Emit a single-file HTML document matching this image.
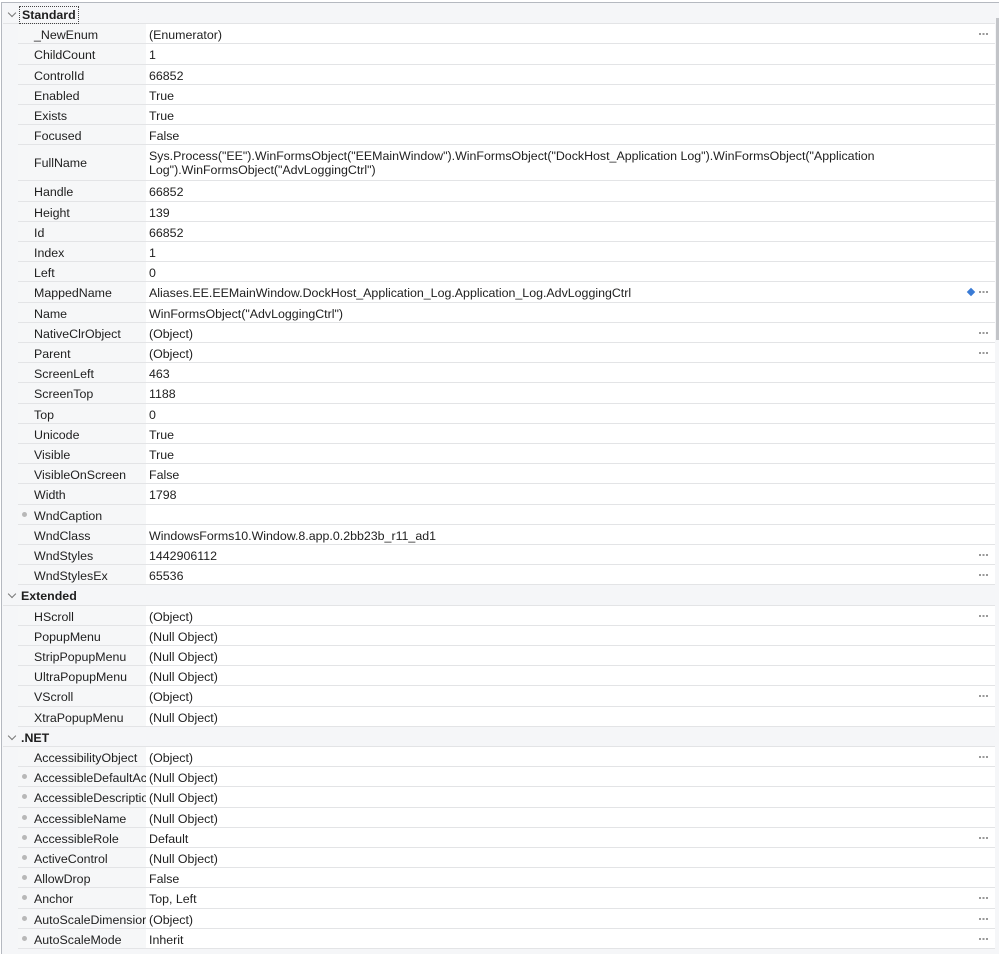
<!DOCTYPE html>
<html><head><meta charset="utf-8"><style>
*{margin:0;padding:0;box-sizing:border-box}
body{width:999px;height:954px;background:#fff;font-family:"Liberation Sans",Tahoma,sans-serif;font-size:12.4px;color:#1e1e1e;position:relative;overflow:hidden}
#frame{position:absolute;left:1px;top:2px;width:998px;height:952px;border-left:1px solid #b5b9c0;border-top:1px solid #b5b9c0;background:#f5f6f8}
.r{position:absolute;left:18px;right:4px;height:20.2px;border-bottom:1px solid #e3e4e6;background:#fff}
.r .n{position:absolute;left:0;top:0;bottom:0;width:128px;background:#f6f7f8;padding-left:16px;padding-top:2px;line-height:18px;white-space:nowrap;overflow:hidden}
.r .v{position:absolute;left:131px;top:0;right:0;padding-top:2px;line-height:18px;white-space:nowrap}
.h{position:absolute;left:3px;right:4px;height:20.2px;border-bottom:1px solid #e3e4e6;background:#f5f6f8;font-weight:bold;line-height:18px;padding-top:2px;padding-left:18px}
.h:before{content:"";position:absolute;left:6px;top:6px;width:5px;height:5px;border-right:1px solid #777;border-bottom:1px solid #777;transform:rotate(45deg)}
.d{position:absolute;left:4px;top:7px;width:5px;height:5px;border-radius:50%;background:#b8b8b8}
.e{position:absolute;right:7px;top:9px;width:9px;height:2px;background:repeating-linear-gradient(90deg,#999 0 2px,transparent 2px 3.5px)}
#sb{position:absolute;right:0;top:18px;width:3px;height:322px;background:#c2c4c8}
</style></head><body>
<div id="frame"></div>
<div id="sb"></div>
<div class="h" style="top:4px"><span style="outline:1px dotted #444;outline-offset:1px;padding:0 1px">Standard</span></div>
<div class="r" style="top:24.2px"><div class="n">_NewEnum</div><div class="v">(Enumerator)</div><span class="e"></span></div>
<div class="r" style="top:44.4px"><div class="n">ChildCount</div><div class="v">1</div></div>
<div class="r" style="top:64.6px"><div class="n">ControlId</div><div class="v">66852</div></div>
<div class="r" style="top:84.8px"><div class="n">Enabled</div><div class="v">True</div></div>
<div class="r" style="top:105px"><div class="n">Exists</div><div class="v">True</div></div>
<div class="r" style="top:125.2px"><div class="n">Focused</div><div class="v">False</div></div>
<div class="r" style="top:145.4px;height:36px"><div class="n" style="line-height:36px;padding-top:0">FullName</div><div class="v" style="line-height:14px;padding-top:4px;white-space:normal;width:740px">Sys.Process("EE").WinFormsObject("EEMainWindow").WinFormsObject("DockHost_Application Log").WinFormsObject("Application Log").WinFormsObject("AdvLoggingCtrl")</div></div>
<div class="r" style="top:181.4px"><div class="n">Handle</div><div class="v">66852</div></div>
<div class="r" style="top:201.6px"><div class="n">Height</div><div class="v">139</div></div>
<div class="r" style="top:221.8px"><div class="n">Id</div><div class="v">66852</div></div>
<div class="r" style="top:242px"><div class="n">Index</div><div class="v">1</div></div>
<div class="r" style="top:262.2px"><div class="n">Left</div><div class="v">0</div></div>
<div class="r" style="top:282.4px"><div class="n">MappedName</div><div class="v">Aliases.EE.EEMainWindow.DockHost_Application_Log.Application_Log.AdvLoggingCtrl</div><span style="position:absolute;right:21px;top:7px;width:6px;height:6px;background:#3a7bd5;transform:rotate(45deg)"></span><span class="e"></span></div>
<div class="r" style="top:302.6px"><div class="n">Name</div><div class="v">WinFormsObject("AdvLoggingCtrl")</div></div>
<div class="r" style="top:322.8px"><div class="n">NativeClrObject</div><div class="v">(Object)</div><span class="e"></span></div>
<div class="r" style="top:343px"><div class="n">Parent</div><div class="v">(Object)</div><span class="e"></span></div>
<div class="r" style="top:363.2px"><div class="n">ScreenLeft</div><div class="v">463</div></div>
<div class="r" style="top:383.4px"><div class="n">ScreenTop</div><div class="v">1188</div></div>
<div class="r" style="top:403.6px"><div class="n">Top</div><div class="v">0</div></div>
<div class="r" style="top:423.8px"><div class="n">Unicode</div><div class="v">True</div></div>
<div class="r" style="top:444px"><div class="n">Visible</div><div class="v">True</div></div>
<div class="r" style="top:464.2px"><div class="n">VisibleOnScreen</div><div class="v">False</div></div>
<div class="r" style="top:484.4px"><div class="n">Width</div><div class="v">1798</div></div>
<div class="r" style="top:504.6px"><div class="n"><i class="d"></i>WndCaption</div><div class="v"></div></div>
<div class="r" style="top:524.8px"><div class="n">WndClass</div><div class="v">WindowsForms10.Window.8.app.0.2bb23b_r11_ad1</div></div>
<div class="r" style="top:545px"><div class="n">WndStyles</div><div class="v">1442906112</div><span class="e"></span></div>
<div class="r" style="top:565.2px"><div class="n">WndStylesEx</div><div class="v">65536</div><span class="e"></span></div>
<div class="h" style="top:585.4px">Extended</div>
<div class="r" style="top:605.6px"><div class="n">HScroll</div><div class="v">(Object)</div><span class="e"></span></div>
<div class="r" style="top:625.8px"><div class="n">PopupMenu</div><div class="v">(Null Object)</div></div>
<div class="r" style="top:646px"><div class="n">StripPopupMenu</div><div class="v">(Null Object)</div></div>
<div class="r" style="top:666.2px"><div class="n">UltraPopupMenu</div><div class="v">(Null Object)</div></div>
<div class="r" style="top:686.4px"><div class="n">VScroll</div><div class="v">(Object)</div><span class="e"></span></div>
<div class="r" style="top:706.6px"><div class="n">XtraPopupMenu</div><div class="v">(Null Object)</div></div>
<div class="h" style="top:726.8px">.NET</div>
<div class="r" style="top:747px"><div class="n">AccessibilityObject</div><div class="v">(Object)</div><span class="e"></span></div>
<div class="r" style="top:767.2px"><div class="n"><i class="d"></i>AccessibleDefaultAc</div><div class="v">(Null Object)</div></div>
<div class="r" style="top:787.4px"><div class="n"><i class="d"></i>AccessibleDescriptio</div><div class="v">(Null Object)</div></div>
<div class="r" style="top:807.6px"><div class="n"><i class="d"></i>AccessibleName</div><div class="v">(Null Object)</div></div>
<div class="r" style="top:827.8px"><div class="n"><i class="d"></i>AccessibleRole</div><div class="v">Default</div><span class="e"></span></div>
<div class="r" style="top:848px"><div class="n"><i class="d"></i>ActiveControl</div><div class="v">(Null Object)</div></div>
<div class="r" style="top:868.2px"><div class="n"><i class="d"></i>AllowDrop</div><div class="v">False</div></div>
<div class="r" style="top:888.4px"><div class="n"><i class="d"></i>Anchor</div><div class="v">Top, Left</div><span class="e"></span></div>
<div class="r" style="top:908.6px"><div class="n"><i class="d"></i>AutoScaleDimensior</div><div class="v">(Object)</div><span class="e"></span></div>
<div class="r" style="top:928.8px"><div class="n"><i class="d"></i>AutoScaleMode</div><div class="v">Inherit</div><span class="e"></span></div>
</body></html>
